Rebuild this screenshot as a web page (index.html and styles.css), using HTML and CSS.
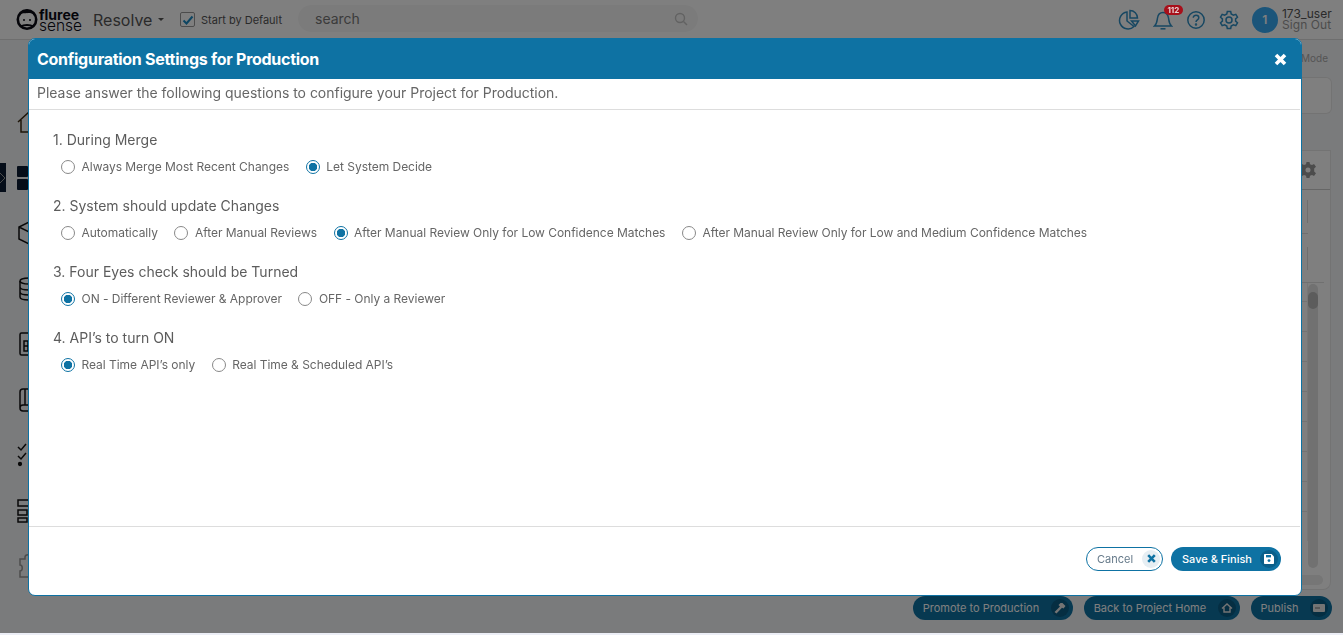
FILE: index.html
```html
<!DOCTYPE html>
<html>
<head>
  <title>Configuration Settings for Production</title>
  <link rel="stylesheet" href="styles.css">
</head>
<body>
  <div class="page">
    <header class="topbar">
      <div class="logo">
        <svg class="logo-mark" width="22" height="23" viewBox="0 0 22 23">
          <circle cx="11" cy="12.5" r="9.2" fill="none" stroke="#0a0a14" stroke-width="2.6"/>
          <path d="M3 8 C5 1 17 1 19 8 C16 5.5 14 6.5 11 6 C8 6.5 6 5.5 3 8 Z" fill="#0a0a14"/>
          <path d="M7 13 H9 M13 13 H15" stroke="#0a0a14" stroke-width="1.4"/>
          <path d="M4.5 19.5 C8 17.5 14 17.5 17.5 19.5" fill="none" stroke="#0a0a14" stroke-width="2"/>
        </svg>
        <div class="logo-text">
          <span class="logo-top">fluree</span>
          <span class="logo-bottom">sense</span>
        </div>
      </div>
      <div class="module">Resolve <span class="caret"></span></div>
      <label class="default-check">
        <span class="checkbox">
          <svg width="12" height="12" viewBox="0 0 12 12"><path d="M1.5 6.5 L4.5 9.5 L10.5 2.5" fill="none" stroke="#1a8ac4" stroke-width="2"/></svg>
        </span>
        Start by Default
      </label>
      <div class="search">
        <span>search</span>
        <svg width="14" height="14" viewBox="0 0 14 14"><circle cx="6" cy="6" r="4.5" fill="none" stroke="#c4c4c4" stroke-width="1.4"/><path d="M9.5 9.5 L13 13" stroke="#c4c4c4" stroke-width="1.4"/></svg>
      </div>
      <div class="top-icons">
        <svg width="22" height="22" viewBox="0 0 22 22" fill="none" stroke="#2f8fc4" stroke-width="1.5">
          <path d="M9 3 A8.5 8.5 0 1 0 16 17.5 L9 12 Z"/>
          <path d="M12 1.5 A7.5 7.5 0 0 1 19.5 9 H12 Z"/>
          <path d="M13.5 12 H20.5 L17.5 17 Z"/>
        </svg>
        <span class="bell">
          <svg width="20" height="22" viewBox="0 0 20 22" fill="none" stroke="#2f8fc4" stroke-width="1.5">
            <path d="M1.5 17 C4 15 4 12 4.5 9 C5 5.5 7 3.5 10 3.5 C13 3.5 15 5.5 15.5 9 C16 12 16 15 18.5 17 Z"/>
            <path d="M7.5 19.8 H12.5"/>
          </svg>
          <span class="badge">112</span>
        </span>
        <svg width="20" height="20" viewBox="0 0 20 20" fill="none" stroke="#2f8fc4" stroke-width="1.5">
          <circle cx="10" cy="10" r="8.2"/>
          <path d="M7.3 7.8 C7.3 4.5 12.8 4.6 12.8 7.8 C12.8 10 10 9.8 10 12"/>
          <circle cx="10" cy="14.6" r="0.5"/>
        </svg>
        <svg width="20" height="20" viewBox="0 0 20 20" fill="none" stroke="#2f8fc4" stroke-width="1.5">
          <path d="M8.3 1.5 H11.7 L12.2 4 L14.4 5.2 L16.8 4.3 L18.5 7.2 L16.6 8.9 V11.1 L18.5 12.8 L16.8 15.7 L14.4 14.8 L12.2 16 L11.7 18.5 H8.3 L7.8 16 L5.6 14.8 L3.2 15.7 L1.5 12.8 L3.4 11.1 V8.9 L1.5 7.2 L3.2 4.3 L5.6 5.2 L7.8 4 Z"/>
          <circle cx="10" cy="10" r="3"/>
        </svg>
      </div>
      <div class="user">
        <span class="avatar">1</span>
        <div class="user-text">
          <span>173_user</span>
          <span class="sign-out">Sign Out</span>
        </div>
      </div>
    </header>

    <div class="workspace">
      <nav class="sidebar">
        <svg class="side-icon" width="24" height="24" viewBox="0 0 24 24" fill="none" stroke="#3a2a10" stroke-width="1.5"><path d="M1 12 L12 2 L23 12 M4 10 V22 H20 V10"/></svg>
        <div class="side-row">
          <span class="side-tab"><svg width="6" height="10" viewBox="0 0 6 10" fill="none" stroke="#999" stroke-width="1"><path d="M0 0 L5 5 L0 10"/></svg></span>
          <svg class="side-icon" width="24" height="24" viewBox="0 0 24 24" fill="#0b1a33"><rect x="0" y="0" width="11" height="11" rx="1"/><rect x="13" y="0" width="11" height="11" rx="1"/><rect x="0" y="13" width="11" height="11" rx="1"/><rect x="13" y="13" width="11" height="11" rx="1"/></svg>
        </div>
        <svg class="side-icon" width="24" height="24" viewBox="0 0 24 24" fill="none" stroke="#111" stroke-width="1.5"><path d="M12 1 L22 6 V18 L12 23 L2 18 V6 Z M2 6 L12 11 L22 6 M12 11 V23"/></svg>
        <svg class="side-icon" width="24" height="24" viewBox="0 0 24 24" fill="none" stroke="#111" stroke-width="1.5"><ellipse cx="12" cy="4" rx="9" ry="3"/><path d="M3 4 V20 C3 22 7 23 12 23 C17 23 21 22 21 20 V4 M3 10 C3 12 7 13 12 13 C17 13 21 12 21 10 M3 15 C3 17 7 18 12 18 C17 18 21 17 21 15"/></svg>
        <svg class="side-icon" width="24" height="24" viewBox="0 0 24 24" fill="none" stroke="#111" stroke-width="1.5"><rect x="3" y="1" width="18" height="22" rx="1.5"/><path d="M7 9 H17 V19 H7 Z M7 14 H17 M11 9 V19"/></svg>
        <svg class="side-icon" width="24" height="24" viewBox="0 0 24 24" fill="none" stroke="#111" stroke-width="1.5"><path d="M3 20 V4 C3 2 4 1 6 1 H21 V23 H6 C4 23 3 22 3 20 C3 18 4 17 6 17 H21 M8 1 V17"/></svg>
        <svg class="side-icon" width="24" height="24" viewBox="0 0 24 24" fill="none" stroke="#111" stroke-width="1.5"><path d="M1 4 L4 7 L9 1 M1 13 L4 16 L9 10"/><circle cx="3" cy="21" r="1.4" fill="#111"/><path d="M13 4 H23 M13 13 H23 M13 21 H23"/></svg>
        <svg class="side-icon" width="24" height="24" viewBox="0 0 24 24" fill="none" stroke="#111" stroke-width="1.5"><rect x="1" y="1" width="22" height="6"/><rect x="1" y="11" width="9" height="5"/><rect x="1" y="19" width="9" height="4"/><rect x="14" y="11" width="9" height="12"/></svg>
        <svg class="side-icon" width="24" height="24" viewBox="0 0 24 24" fill="none" stroke="#999" stroke-width="1.5"><path d="M8 3 C8 0 14 0 14 3 V5 H21 V11 H19 C16 11 16 17 19 17 H21 V23 H3 V17 C6 17 6 11 3 11 V5 H8 Z"/></svg>
      </nav>

      <aside class="side-panel">
        <div class="mode-label">Mode</div>
        <div class="mode-card"></div>
        <div class="table-card">
          <div class="table-head">
            <svg width="16" height="16" viewBox="0 0 16 16" fill="#999"><path d="M6.5 0 H9.5 L10 2.2 L12 3 L14 2 L16 4.8 L14.2 6.5 V9.5 L16 11.2 L14 14 L12 13 L10 13.8 L9.5 16 H6.5 L6 13.8 L4 13 L2 14 L0 11.2 L1.8 9.5 V6.5 L0 4.8 L2 2 L4 3 L6 2.2 Z M8 5.5 A2.5 2.5 0 1 0 8 10.5 A2.5 2.5 0 1 0 8 5.5 Z" fill-rule="evenodd"/></svg>
          </div>
          <div class="filter-row"><span class="filter-line"></span></div>
          <div class="filter-row filter-row-last"><span class="filter-line"></span></div>
          <div class="table-ticks"></div>
          <div class="scroll-track"><span class="scroll-thumb"></span></div>
          <div class="scroll-bottom"></div>
        </div>
      </aside>
    </div>

    <footer class="page-actions">
      <button class="pill">Promote to Production
        <span class="pill-icon"><svg width="12" height="12" viewBox="0 0 12 12" fill="#e8e8e8"><path d="M0.5 10 L6 4.5 L4.5 3 L6.5 1 H8.5 L11.5 4 L9.5 6.5 L8 5.8 L2.5 11.5 Z"/></svg></span>
      </button>
      <button class="pill">Back to Project Home
        <span class="pill-icon"><svg width="12" height="12" viewBox="0 0 12 12" fill="none" stroke="#e8e8e8" stroke-width="1.4"><path d="M1 6.5 L6 2 L11 6.5 M3 5.5 V10 H9 V5.5"/></svg></span>
      </button>
      <button class="pill">Publish
        <span class="pill-icon"><svg width="12" height="10" viewBox="0 0 12 10" fill="#e8e8e8"><rect x="0" y="1" width="12" height="8" rx="1"/><path d="M2 5 H7" stroke="#777"/></svg></span>
      </button>
    </footer>
  </div>

  <div class="overlay"></div>

  <div class="modal">
    <div class="modal-title">
      <span>Configuration Settings for Production</span>
      <svg class="modal-close" width="13" height="13" viewBox="0 0 13 13"><path d="M2 2 L11 11 M11 2 L2 11" stroke="#fff" stroke-width="3.6"/></svg>
    </div>
    <div class="modal-sub">Please answer the following questions to configure your Project for Production.</div>
    <div class="modal-body">
      <div class="question">
        <div class="question-label">1. During Merge</div>
        <div class="options">
          <label class="option"><span class="radio"></span>Always Merge Most Recent Changes</label>
          <label class="option"><span class="radio radio-on"></span>Let System Decide</label>
        </div>
      </div>
      <div class="question">
        <div class="question-label">2. System should update Changes</div>
        <div class="options">
          <label class="option"><span class="radio"></span>Automatically</label>
          <label class="option"><span class="radio"></span>After Manual Reviews</label>
          <label class="option"><span class="radio radio-on"></span>After Manual Review Only for Low Confidence Matches</label>
          <label class="option"><span class="radio"></span>After Manual Review Only for Low and Medium Confidence Matches</label>
        </div>
      </div>
      <div class="question">
        <div class="question-label">3. Four Eyes check should be Turned</div>
        <div class="options">
          <label class="option"><span class="radio radio-on"></span>ON - Different Reviewer &amp; Approver</label>
          <label class="option"><span class="radio"></span>OFF - Only a Reviewer</label>
        </div>
      </div>
      <div class="question">
        <div class="question-label">4. API’s to turn ON</div>
        <div class="options">
          <label class="option"><span class="radio radio-on"></span>Real Time API’s only</label>
          <label class="option"><span class="radio"></span>Real Time &amp; Scheduled API’s</label>
        </div>
      </div>
    </div>
    <div class="modal-foot">
      <button class="btn btn-cancel">Cancel
        <span class="btn-icon btn-icon-light"><svg width="9" height="9" viewBox="0 0 9 9"><path d="M1.2 1.2 L7.8 7.8 M7.8 1.2 L1.2 7.8" stroke="#0e72a3" stroke-width="2.6"/></svg></span>
      </button>
      <button class="btn btn-save">Save &amp; Finish
        <span class="btn-icon btn-icon-dark"><svg width="10" height="10" viewBox="0 0 10 10"><path d="M0 1 C0 .4 .4 0 1 0 H7.5 L10 2.5 V9 C10 9.6 9.6 10 9 10 H1 C.4 10 0 9.6 0 9 Z" fill="#fff"/><rect x="2" y="1" width="5" height="2.4" fill="#0e72a3"/><circle cx="5" cy="6.6" r="1.4" fill="#0e72a3"/></svg></span>
      </button>
    </div>
  </div>
</body>
</html>
```

FILE: styles.css
```css
* {
  box-sizing: border-box;
}

html, body {
  margin: 0;
  height: 635px;
  overflow: hidden;
}

body {
  font-family: Inter, "Noto Sans", sans-serif;
  color: #555;
  background: #eceef6;
}

.page {
  height: 633px;
  display: flex;
  flex-direction: column;
  background: #f5f6f9;
}

/* top bar */
.topbar {
  height: 40px;
  flex: none;
  display: flex;
  align-items: center;
  padding-left: 16px;
  background: #fff;
  border-bottom: 1px solid #ddd;
}

.logo {
  display: flex;
  align-items: center;
  gap: 1px;
  width: 77px;
}

.logo-mark {
  margin-top: -3px;
  flex: none;
}

.logo-text {
  display: flex;
  flex-direction: column;
  color: #0a0a14;
  line-height: 11px;
  margin-top: 1px;
}

.logo-top {
  font-size: 14px;
  font-weight: 700;
}

.logo-bottom {
  font-size: 15.5px;
  font-weight: 300;
}

.module {
  font-size: 16px;
  width: 87px;
  display: flex;
  align-items: center;
  gap: 5px;
}

.caret {
  border: 3.5px solid transparent;
  border-top-color: #555;
  border-bottom: 0;
  margin-left: 1px;
}

.default-check {
  display: flex;
  align-items: center;
  gap: 6px;
  font-size: 11px;
  width: 118px;
}

.checkbox {
  width: 15px;
  height: 15px;
  border: 1px solid #999;
  border-radius: 2px;
  display: flex;
  align-items: center;
  justify-content: center;
}

.search {
  width: 400px;
  height: 27px;
  margin-top: -2px;
  border-radius: 14px;
  background: #f7f7f7;
  display: flex;
  align-items: center;
  justify-content: space-between;
  padding: 0 10px 0 17px;
  font-size: 14px;
  color: #777;
}

.top-icons {
  margin-left: auto;
  display: flex;
  align-items: center;
  gap: 13px;
}

.bell {
  position: relative;
  display: flex;
}

.badge {
  position: absolute;
  z-index: 2;
  top: -4px;
  left: 11px;
  width: 19px;
  background: #a80f1a;
  color: #e8d4d4;
  font-size: 8px;
  font-weight: 700;
  line-height: 10px;
  text-align: center;
  border-radius: 5px;
}

.user {
  display: flex;
  align-items: center;
  gap: 4px;
  margin-left: 13px;
  padding-right: 11px;
}

.avatar {
  width: 26px;
  height: 26px;
  border-radius: 50%;
  background: #36aaf5;
  color: #fff;
  font-size: 12px;
  font-weight: 600;
  display: flex;
  align-items: center;
  justify-content: center;
}

.user-text {
  display: flex;
  flex-direction: column;
  font-size: 12px;
  line-height: 11px;
  letter-spacing: 0.1px;
  margin-top: -2px;
}

.sign-out {
  color: #999;
}

/* what sits behind the dialog */
.workspace {
  flex: 1;
  display: flex;
  justify-content: space-between;
  min-height: 0;
}

.sidebar {
  width: 60px;
  display: flex;
  flex-direction: column;
  align-items: flex-start;
  padding-top: 70px;
  gap: 31.5px;
}

.side-icon {
  margin-left: 17px;
  flex: none;
}

.side-row {
  display: flex;
  align-items: center;
  position: relative;
}

.side-tab {
  position: absolute;
  left: 0;
  width: 6px;
  height: 29px;
  background: #0b1a33;
  display: flex;
  align-items: center;
}

.side-panel {
  width: 52px;
  padding-right: 11px;
  display: flex;
  flex-direction: column;
  font-size: 10px;
  color: #aaa;
}

.mode-label {
  margin-top: 12px;
  height: 25px;
  text-align: right;
  padding-right: 4px;
}

.mode-card {
  height: 37px;
  background: #fff;
  border: 1px solid #e6e6e6;
  border-left: 0;
  border-radius: 0 6px 6px 0;
}

.table-card {
  position: relative;
  height: 440px;
  margin-top: 36px;
  margin-right: 1px;
  background: #fff;
  border: 1px solid #e6e6e6;
  border-left: 0;
  border-radius: 0 0 8px 0;
}

.table-head {
  height: 39px;
  padding-left: 9px;
  border-bottom: 1px solid #ccc;
  display: flex;
  align-items: center;
}

.filter-row {
  width: 17px;
  height: 44px;
  padding-top: 10px;
  border-bottom: 1px solid #e0e0e0;
}

.filter-row-last {
  width: 33px;
  height: 49px;
  padding-top: 13px;
}

.filter-line {
  display: block;
  width: 17px;
  height: 23px;
  border-right: 1px solid #ddd;
}

.table-ticks {
  width: 17px;
  height: 258px;
  border-right: 1px solid #eee;
  background: repeating-linear-gradient(to bottom, transparent 0 18px, #e6e6e6 18px 19px, transparent 19px 30px);
}

.scroll-track {
  position: absolute;
  left: 17px;
  top: 133px;
  width: 10px;
  height: 284px;
  border-radius: 5px;
  background: #e2e2e2;
}

.scroll-thumb {
  display: block;
  width: 10px;
  height: 17px;
  margin-top: 8px;
  border-radius: 5px;
  background: #b8b8b8;
}

.scroll-bottom {
  position: absolute;
  left: 0;
  top: 424px;
  width: 32px;
  height: 10px;
  border-radius: 0 5px 5px 0;
  background: #ececec;
}

.page-actions {
  height: 40px;
  flex: none;
  display: flex;
  justify-content: flex-end;
  align-items: flex-start;
  gap: 11px;
  padding: 3px 11px 0 0;
}

.pill {
  height: 24px;
  border: 0;
  border-radius: 12px;
  background: #0e72a3;
  color: #fff;
  font: 11px Inter, sans-serif;
  display: flex;
  align-items: center;
  justify-content: space-between;
  gap: 11.5px;
  padding: 0 4px 0 10px;
}

.pill-icon {
  width: 18px;
  height: 18px;
  border-radius: 50%;
  background: #0a5c85;
  display: flex;
  align-items: center;
  justify-content: center;
}

.overlay {
  position: fixed;
  left: 0;
  top: 0;
  right: 0;
  bottom: 2px;
  background: rgba(0, 0, 0, 0.5);
}

/* dialog */
.modal {
  position: fixed;
  left: 28px;
  top: 38px;
  width: 1274px;
  height: 558px;
  background: #fff;
  border: 1px solid #0e72a3;
  border-radius: 7px;
  display: flex;
  flex-direction: column;
  overflow: hidden;
}

.modal-title {
  height: 40px;
  flex: none;
  background: #0e72a3;
  color: #fff;
  font-size: 16px;
  font-weight: 700;
  letter-spacing: -0.27px;
  display: flex;
  align-items: center;
  justify-content: space-between;
  padding: 0 14px 0 8px;
}

.modal-sub {
  height: 31px;
  flex: none;
  margin-right: 1px;
  border-bottom: 1px solid #ddd;
  padding-left: 8px;
  font-size: 14px;
  line-height: 28px;
  letter-spacing: -0.025px;
  color: #666;
}

.modal-body {
  flex: 1;
  padding: 20px 24px 0;
}

.question {
  height: 66px;
}

.question-label {
  font-size: 14px;
  line-height: 20px;
  color: #5c5c5c;
}

.options {
  display: flex;
  gap: 16.5px;
  margin-top: 10px;
  padding-left: 8px;
}

.option {
  display: flex;
  align-items: center;
  gap: 6.5px;
  font-size: 12px;
  line-height: 14px;
  letter-spacing: -0.03px;
  color: #666;
}

.radio {
  width: 14px;
  height: 14px;
  flex: none;
  border: 1px solid #888;
  border-radius: 50%;
  background: #fff;
}

.radio-on {
  border: 1.5px solid #0e72a3;
  background: radial-gradient(circle, #0e72a3 0 4px, #fff 4.5px);
}

.modal-foot {
  height: 69px;
  flex: none;
  margin-right: 1px;
  border-top: 1px solid #ddd;
  display: flex;
  justify-content: flex-end;
  align-items: center;
  gap: 8px;
  padding: 0 19px 5px 0;
}

.btn {
  height: 24px;
  border-radius: 12px;
  font: 11px Inter, sans-serif;
  display: flex;
  align-items: center;
  justify-content: space-between;
  padding: 0 3px 0 11px;
}

.btn-cancel {
  width: 77px;
  background: #fff;
  border: 1px solid #0e72a3;
  color: #667a8a;
  padding-left: 10px;
  padding-right: 2px;
}

.btn-save {
  width: 110px;
  background: #0e72a3;
  border: 0;
  color: #fff;
  font-weight: 500;
}

.btn-icon {
  width: 18px;
  height: 18px;
  border-radius: 50%;
  display: flex;
  align-items: center;
  justify-content: center;
}

.btn-icon-light {
  background: #e6eef3;
}

.btn-icon-dark {
  background: #0a5f8a;
}
```
